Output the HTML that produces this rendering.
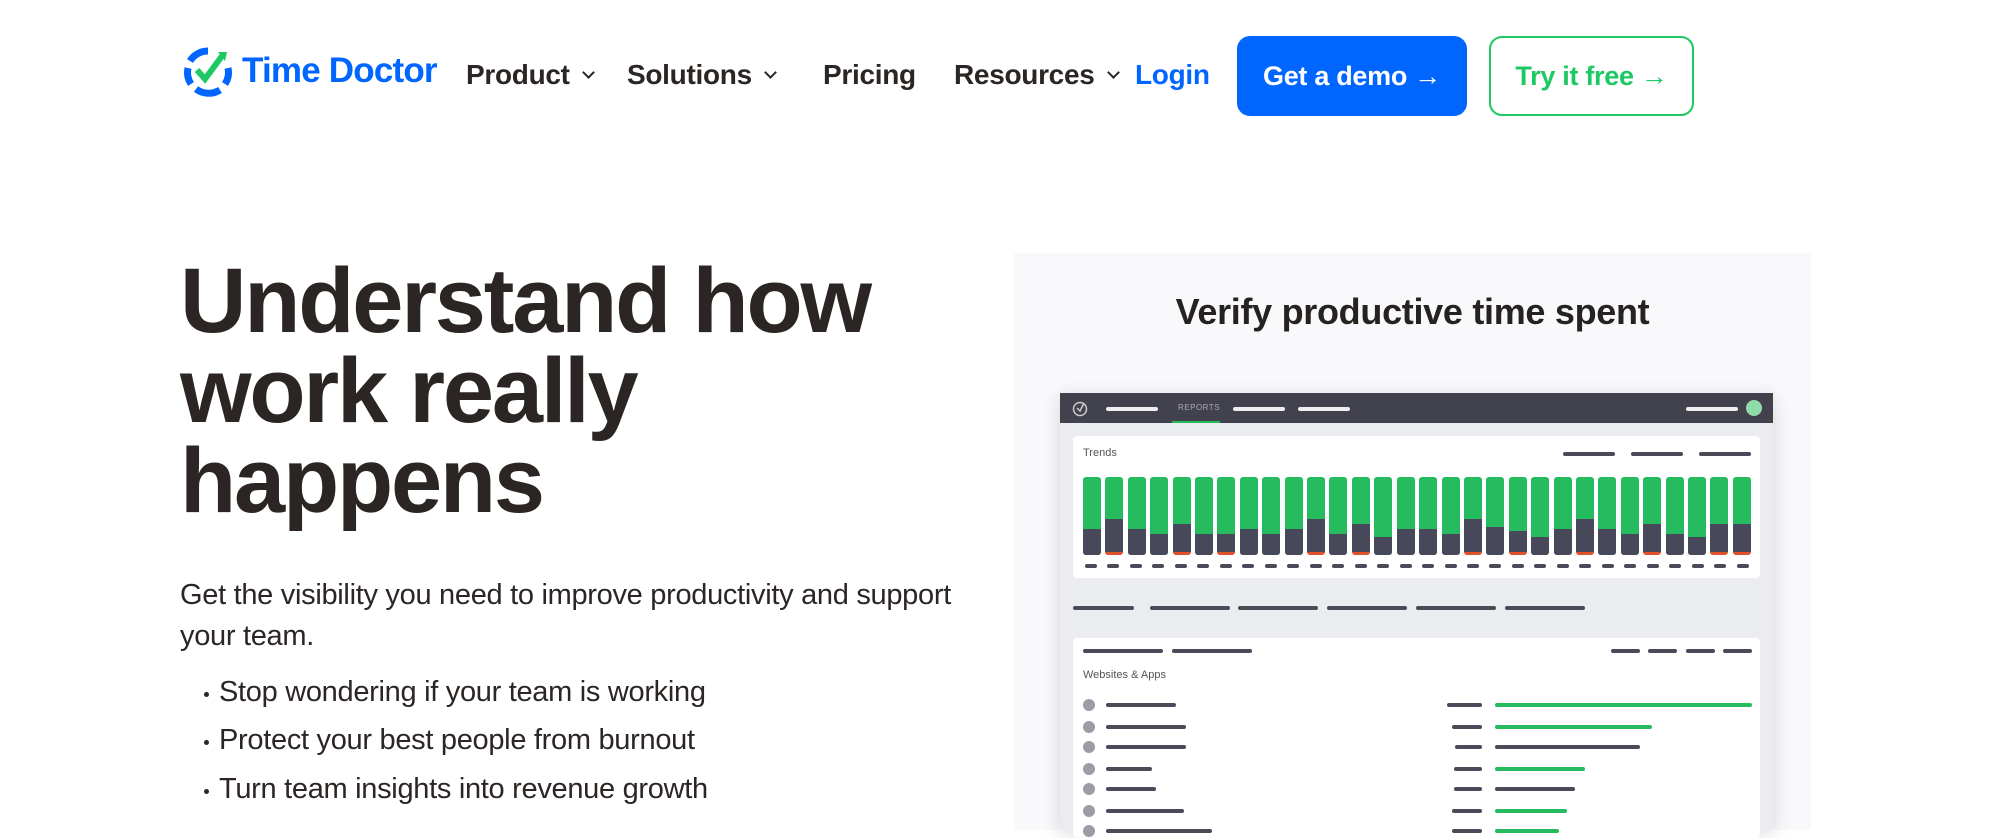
<!DOCTYPE html>
<html><head><meta charset="utf-8"><style>
*{margin:0;padding:0;box-sizing:border-box}
body{width:2000px;height:830px;overflow:hidden;background:#fff;font-family:"Liberation Sans",sans-serif;color:#2b2523;position:relative}
.a{position:absolute}
.nav{font-weight:bold;font-size:28px;top:59px;letter-spacing:-0.3px}
.chev{display:inline-block;width:9px;height:9px;border-right:2.5px solid #2b2523;border-bottom:2.5px solid #2b2523;transform:rotate(45deg);margin-left:14px;position:relative;top:-7px}
.btn{border-radius:13px;font-weight:bold;font-size:27px;display:flex;align-items:center;justify-content:center;letter-spacing:-0.3px}
h1{position:absolute;left:180px;top:256px;font-size:92px;line-height:90px;font-weight:bold;letter-spacing:-2.2px;color:#2b2523}
.p{font-size:29px;letter-spacing:-0.3px;color:#2b2523}
.li{font-size:29px;left:219px;letter-spacing:-0.3px}
.li:before{content:"";position:absolute;left:-15px;top:16px;width:5px;height:5px;border-radius:50%;background:#2b2523}
.ln{position:absolute;height:4px;border-radius:2px;background:#4a4a58}
.g{background:#27bb5f}
.bars{position:absolute;left:1083px;top:477px;width:668px;height:80px;display:flex;justify-content:space-between}
.bar{width:18px;height:78px;border-radius:3px;background:#27bb5f;position:relative;overflow:hidden}
.bar i{position:absolute;left:0;right:0;bottom:0;background:#474859}
.bar.r{border-bottom:3px solid #e0502a}
.dots{position:absolute;left:1085px;top:564px;width:664px;display:flex;justify-content:space-between}
.dots b{width:12px;height:4px;border-radius:2px;background:#4a4a58}
.c{position:absolute;width:12px;height:12px;border-radius:50%;background:#9d9ca6;left:1083px}
</style></head><body>

<svg class="a" style="left:182px;top:46px" width="52" height="52" viewBox="0 0 52 52">
<path d="M26 5 A21 21 0 0 0 8 15" stroke="#0066ff" stroke-width="7" fill="none"/>
<path d="M6 22 A21 21 0 0 0 9 38" stroke="#0066ff" stroke-width="7" fill="none"/>
<path d="M14 43 A21 21 0 0 0 38 44" stroke="#0066ff" stroke-width="7" fill="none"/>
<path d="M43 38 A21 21 0 0 0 46 22" stroke="#0066ff" stroke-width="7" fill="none"/>
<path d="M15 24 L23 33 L40 10" stroke="#1ec964" stroke-width="6" fill="none"/>
<path d="M36 6 L45 6 L43 15 Z" fill="#1ec964"/>
</svg>
<div class="a" style="left:242px;top:51px;font-size:35px;font-weight:bold;color:#0066ff;letter-spacing:-0.8px">Time Doctor</div>

<div class="a nav" style="left:466px">Product<span class="chev"></span></div>
<div class="a nav" style="left:627px">Solutions<span class="chev"></span></div>
<div class="a nav" style="left:823px">Pricing</div>
<div class="a nav" style="left:954px">Resources<span class="chev"></span></div>
<div class="a nav" style="left:1135px;color:#0066ff">Login</div>
<div class="a btn" style="left:1237px;top:36px;width:230px;height:80px;background:#0066ff;color:#fff">Get a demo →</div>
<div class="a btn" style="left:1489px;top:36px;width:205px;height:80px;border:2.5px solid #1ec964;color:#1ec964">Try it free →</div>

<h1>Understand how<br>work really<br>happens</h1>
<div class="a p" style="left:180px;top:575px;line-height:41px;width:820px">Get the visibility you need to improve productivity and support<br>your team.</div>
<div class="a li" style="top:676px">Stop wondering if your team is working</div>
<div class="a li" style="top:724px">Protect your best people from burnout</div>
<div class="a li" style="top:773px">Turn team insights into revenue growth</div>

<div class="a" style="left:1014px;top:253px;width:797px;height:577px;background:#f9f9fb"></div>
<div class="a" style="left:1014px;top:291px;width:797px;text-align:center;font-size:36px;font-weight:bold;letter-spacing:-0.3px;color:#262220">Verify productive time spent</div>
<div class="a" style="left:1060px;top:393px;width:713px;height:437px;background:#ebecf0;box-shadow:0 4px 18px rgba(0,0,0,0.15)"></div>
<div class="a" style="left:1060px;top:393px;width:713px;height:30px;background:#42424e"></div>
<svg class="a" style="left:1071px;top:399px" width="18" height="18" viewBox="0 0 18 18"><circle cx="9" cy="10" r="6.5" stroke="#ccc" stroke-width="1.5" fill="none"/><path d="M6 9 L9 12 L13 4" stroke="#ccc" stroke-width="1.5" fill="none"/></svg>
<div class="ln" style="left:1106px;top:407px;width:52px;background:#eee"></div>
<div class="a" style="left:1178px;top:403px;font-size:8px;color:#aaa;letter-spacing:0.5px">REPORTS</div>
<div class="a" style="left:1172px;top:421px;width:48px;height:2px;background:#27bb5f"></div>
<div class="ln" style="left:1233px;top:407px;width:52px;background:#eee"></div>
<div class="ln" style="left:1298px;top:407px;width:52px;background:#eee"></div>
<div class="ln" style="left:1686px;top:407px;width:52px;background:#eee"></div>
<div class="a" style="left:1746px;top:400px;width:16px;height:16px;border-radius:50%;background:#8fdca8"></div>

<div class="a" style="left:1073px;top:436px;width:687px;height:142px;background:#fff;border-radius:4px"></div>
<div class="a" style="left:1083px;top:447px;font-size:11px;color:#555">Trends</div>
<div class="ln" style="left:1563px;top:452px;width:52px"></div>
<div class="ln" style="left:1631px;top:452px;width:52px"></div>
<div class="ln" style="left:1699px;top:452px;width:52px"></div>
<div class="bars">
<div class="bar"><i style="height:26px"></i></div><div class="bar r"><i style="height:33px"></i></div><div class="bar"><i style="height:26px"></i></div><div class="bar"><i style="height:21px"></i></div><div class="bar r"><i style="height:28px"></i></div><div class="bar"><i style="height:21px"></i></div><div class="bar r"><i style="height:18px"></i></div><div class="bar"><i style="height:26px"></i></div><div class="bar"><i style="height:21px"></i></div><div class="bar"><i style="height:26px"></i></div><div class="bar r"><i style="height:33px"></i></div><div class="bar"><i style="height:21px"></i></div><div class="bar r"><i style="height:28px"></i></div><div class="bar"><i style="height:18px"></i></div><div class="bar"><i style="height:26px"></i></div><div class="bar"><i style="height:26px"></i></div><div class="bar"><i style="height:21px"></i></div><div class="bar r"><i style="height:33px"></i></div><div class="bar"><i style="height:28px"></i></div><div class="bar r"><i style="height:21px"></i></div><div class="bar"><i style="height:18px"></i></div><div class="bar"><i style="height:26px"></i></div><div class="bar r"><i style="height:33px"></i></div><div class="bar"><i style="height:26px"></i></div><div class="bar"><i style="height:21px"></i></div><div class="bar r"><i style="height:28px"></i></div><div class="bar"><i style="height:21px"></i></div><div class="bar"><i style="height:18px"></i></div><div class="bar r"><i style="height:28px"></i></div><div class="bar r"><i style="height:28px"></i></div>
</div>
<div class="dots"><b></b><b></b><b></b><b></b><b></b><b></b><b></b><b></b><b></b><b></b><b></b><b></b><b></b><b></b><b></b><b></b><b></b><b></b><b></b><b></b><b></b><b></b><b></b><b></b><b></b><b></b><b></b><b></b><b></b><b></b></div>

<div class="ln" style="left:1073px;top:606px;width:61px"></div>
<div class="ln" style="left:1150px;top:606px;width:80px"></div>
<div class="ln" style="left:1238px;top:606px;width:80px"></div>
<div class="ln" style="left:1327px;top:606px;width:80px"></div>
<div class="ln" style="left:1416px;top:606px;width:80px"></div>
<div class="ln" style="left:1505px;top:606px;width:80px"></div>

<div class="a" style="left:1073px;top:638px;width:687px;height:200px;background:#fff;border-radius:4px"></div>
<div class="ln" style="left:1083px;top:649px;width:80px"></div>
<div class="ln" style="left:1172px;top:649px;width:80px"></div>
<div class="ln" style="left:1611px;top:649px;width:29px"></div>
<div class="ln" style="left:1648px;top:649px;width:29px"></div>
<div class="ln" style="left:1686px;top:649px;width:29px"></div>
<div class="ln" style="left:1723px;top:649px;width:29px"></div>
<div class="a" style="left:1083px;top:669px;font-size:11px;color:#555">Websites &amp; Apps</div>

<div class="c" style="top:699px"></div><div class="ln" style="left:1106px;top:703px;width:70px"></div><div class="ln" style="left:1447px;top:703px;width:35px"></div><div class="ln g" style="left:1495px;top:703px;width:257px"></div>
<div class="c" style="top:721px"></div><div class="ln" style="left:1106px;top:725px;width:80px"></div><div class="ln" style="left:1452px;top:725px;width:30px"></div><div class="ln g" style="left:1495px;top:725px;width:157px"></div>
<div class="c" style="top:741px"></div><div class="ln" style="left:1106px;top:745px;width:80px"></div><div class="ln" style="left:1455px;top:745px;width:27px"></div><div class="ln" style="left:1495px;top:745px;width:145px"></div>
<div class="c" style="top:763px"></div><div class="ln" style="left:1106px;top:767px;width:46px"></div><div class="ln" style="left:1454px;top:767px;width:28px"></div><div class="ln g" style="left:1495px;top:767px;width:90px"></div>
<div class="c" style="top:783px"></div><div class="ln" style="left:1106px;top:787px;width:50px"></div><div class="ln" style="left:1454px;top:787px;width:28px"></div><div class="ln" style="left:1495px;top:787px;width:80px"></div>
<div class="c" style="top:805px"></div><div class="ln" style="left:1106px;top:809px;width:78px"></div><div class="ln" style="left:1452px;top:809px;width:30px"></div><div class="ln g" style="left:1495px;top:809px;width:72px"></div>
<div class="c" style="top:825px"></div><div class="ln" style="left:1106px;top:829px;width:106px"></div><div class="ln" style="left:1452px;top:829px;width:30px"></div><div class="ln g" style="left:1495px;top:829px;width:64px"></div>
</body></html>
